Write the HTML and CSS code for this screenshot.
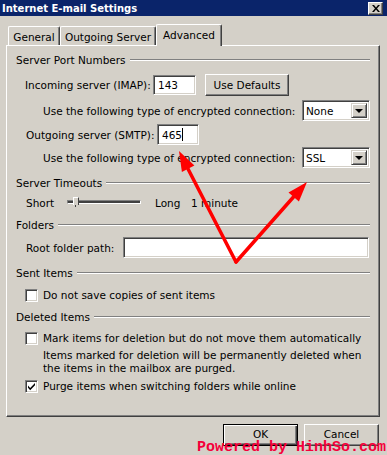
FILE: index.html
```html
<!DOCTYPE html>
<html lang="en">
<head>
  <meta charset="UTF-8">
  <title>Internet E-mail Settings</title>
  <link rel="stylesheet" href="styles.css">
</head>
<body>
  <div class="window">
    <div class="titlebar">
      <span class="title">Internet E-mail Settings</span>
      <span class="close-btn">
        <svg width="8" height="7" viewBox="0 0 8 7"><path d="M0 0h2l2 2.5L6 0h2L5 3.5 8 7H6L4 4.5 2 7H0l3-3.5z" fill="#000"/></svg>
      </span>
    </div>

    <div class="dialog">
      <div class="tabs">
        <div class="tab tab-general">General</div>
        <div class="tab tab-outgoing">Outgoing Server</div>
        <div class="tab tab-advanced active">Advanced</div>
      </div>

      <div class="panel">
        <div class="group-title"><span>Server Port Numbers</span><i class="etch"></i></div>

        <div class="row row-incoming">
          <span class="lbl lbl-incoming">Incoming server (IMAP):</span>
          <div class="field port port-in">143</div>
          <div class="btn btn-defaults">Use Defaults</div>
        </div>

        <div class="row row-enc">
          <span class="lbl">Use the following type of encrypted connection:</span>
          <div class="select"><span class="select-text">None</span><span class="drop"><i class="tri"></i></span></div>
        </div>

        <div class="row row-outgoing">
          <span class="lbl lbl-outgoing">Outgoing server (SMTP):</span>
          <div class="field port port-out">465<i class="caret"></i></div>
        </div>

        <div class="row row-enc row-enc2">
          <span class="lbl">Use the following type of encrypted connection:</span>
          <div class="select"><span class="select-text">SSL</span><span class="drop"><i class="tri"></i></span></div>
        </div>

        <div class="group-title gt-timeouts"><span>Server Timeouts</span><i class="etch"></i></div>

        <div class="row row-slider">
          <span class="lbl lbl-short">Short</span>
          <div class="slider"><i class="track"></i><i class="thumb"></i></div>
          <span class="lbl lbl-long">Long</span>
          <span class="lbl">1 minute</span>
        </div>

        <div class="group-title gt-folders"><span>Folders</span><i class="etch"></i></div>

        <div class="row row-root">
          <span class="lbl lbl-root">Root folder path:</span>
          <div class="field path"></div>
        </div>

        <div class="group-title gt-sent"><span>Sent Items</span><i class="etch"></i></div>

        <div class="row row-check row-sent">
          <span class="check"></span>
          <span class="lbl">Do not save copies of sent items</span>
        </div>

        <div class="group-title gt-deleted"><span>Deleted Items</span><i class="etch"></i></div>

        <div class="row row-check row-mark">
          <span class="check"></span>
          <span class="lbl">Mark items for deletion but do not move them automatically</span>
        </div>

        <div class="note">
          Items marked for deletion will be permanently deleted when<br>
          the items in the mailbox are purged.
        </div>

        <div class="row row-check row-purge">
          <span class="check">
            <svg width="9" height="9" viewBox="0 0 9 9"><path d="M1 3.5l2.2 2.5L8 1v2.2L3.2 8.2 1 5.8z" fill="#000"/></svg>
          </span>
          <span class="lbl">Purge items when switching folders while online</span>
        </div>
      </div>

      <div class="footer">
        <div class="btn btn-ok">OK</div>
        <div class="btn btn-cancel">Cancel</div>
      </div>
    </div>

    <!-- red annotation arrows drawn over the dialog -->
    <svg class="arrows" width="387" height="455" viewBox="0 0 387 455">
      <g stroke="#ff0000" stroke-width="3.5" fill="none" stroke-linecap="round">
        <line x1="236" y1="262" x2="186" y2="165"/>
        <line x1="236" y1="262" x2="297" y2="193"/>
      </g>
      <g fill="#ff0000">
        <polygon points="179,151 194.4,165.6 181.9,172"/>
        <polygon points="307,182 298.9,201.6 288.5,192.4"/>
      </g>
    </svg>

    <div class="watermark">Powered by HinhSo.com</div>
  </div>
</body>
</html>
```

FILE: styles.css
```css
body {
  margin: 0;
  background: #d4d0c8;
  font-family: "DejaVu Sans", sans-serif;
  font-size: 10.5px;
  color: #000;
}
.window {
  position: relative;
  width: 387px;
  height: 455px;
  overflow: hidden;
  background: #d4d0c8;
}

/* title bar */
.titlebar {
  height: 16px;
  background: #0a246a;
  display: flex;
  align-items: center;
  justify-content: space-between;
  padding: 0 4px 0 2px;
}
.title {
  color: #fff;
  font-weight: bold;
  font-size: 10px;
}
.close-btn {
  width: 15px;
  height: 13px;
  box-sizing: border-box;
  margin-top: 1px;
  background: #d4d0c8;
  border-top: 1px solid #fff;
  border-left: 1px solid #fff;
  border-right: 1px solid #404040;
  border-bottom: 1px solid #404040;
  box-shadow: inset -1px -1px #808080;
  display: flex;
  align-items: center;
  justify-content: center;
}

/* tabs */
.dialog {
  padding-top: 8px;
}
.tabs {
  display: flex;
  align-items: flex-end;
  height: 21px;
  margin-left: 8px;
}
.tab {
  box-sizing: border-box;
  height: 19px;
  border-top: 1px solid #fff;
  border-left: 1px solid #fff;
  border-right: 1px solid #404040;
  border-radius: 2px 2px 0 0;
  box-shadow: inset -1px 0 #808080;
  display: flex;
  align-items: center;
  justify-content: center;
  padding-top: 1px;
}
.tab-general { width: 52px; }
.tab-outgoing { width: 96px; }
.tab-advanced { width: 66px; }
.tab.active {
  height: 22px;
  margin-bottom: -1px;
  position: relative;
  z-index: 1;
  background: #d4d0c8;
  padding-bottom: 3px;
}

/* panel */
.panel {
  box-sizing: border-box;
  margin-left: 6px;
  width: 374px;
  height: 372px;
  border-top: 1px solid #fff;
  border-left: 1px solid #fff;
  border-right: 1px solid #404040;
  border-bottom: 1px solid #404040;
  box-shadow: inset -1px -1px #808080;
  padding: 7px 9px 0 9px;
}
.group-title {
  height: 14px;
  display: flex;
  align-items: center;
}
.group-title .etch {
  flex: 1;
  height: 1px;
  margin-left: 4px;
  background: #808080;
  border-bottom: 1px solid #fff;
}
.gt-timeouts { margin-top: 8px; }
.gt-folders { margin-top: 6px; }
.gt-sent { margin-top: 8px; }
.gt-deleted { margin-top: 8px; }

.row {
  display: flex;
  align-items: center;
}
.lbl {
  white-space: nowrap;
}

/* sunken field */
.field {
  box-sizing: border-box;
  background: #fff;
  border-top: 1px solid #808080;
  border-left: 1px solid #808080;
  border-right: 1px solid #fff;
  border-bottom: 1px solid #fff;
  box-shadow: inset 1px 1px #404040, inset -1px -1px #d4d0c8;
  display: flex;
  align-items: center;
  padding-left: 4px;
}

/* raised button */
.btn {
  box-sizing: border-box;
  background: #d4d0c8;
  border-top: 1px solid #fff;
  border-left: 1px solid #fff;
  border-right: 1px solid #404040;
  border-bottom: 1px solid #404040;
  box-shadow: inset -1px -1px #808080;
  display: flex;
  align-items: center;
  justify-content: center;
}

.row-incoming {
  margin-top: 7px;
  height: 22px;
  padding-left: 9px;
}
.lbl-incoming { width: 128px; }
.port-in { width: 43px; height: 20px; }
.btn-defaults {
  width: 84px;
  height: 22px;
  margin-left: 9px;
}

.row-enc {
  margin-top: 4px;
  height: 21px;
  padding-left: 27px;
}
.row-enc2 { margin-top: 2px; }
.select {
  box-sizing: border-box;
  margin-left: auto;
  width: 68px;
  height: 21px;
  background: #fff;
  border-top: 1px solid #808080;
  border-left: 1px solid #808080;
  border-right: 1px solid #fff;
  border-bottom: 1px solid #fff;
  box-shadow: inset 1px 1px #404040, inset -1px -1px #d4d0c8;
  display: flex;
  align-items: center;
  padding: 2px 2px 2px 3px;
}
.select-text { flex: 1; }
.drop {
  box-sizing: border-box;
  width: 16px;
  height: 15px;
  background: #d4d0c8;
  border-top: 1px solid #d4d0c8;
  border-left: 1px solid #d4d0c8;
  border-right: 1px solid #404040;
  border-bottom: 1px solid #404040;
  box-shadow: inset 1px 1px #fff, inset -1px -1px #808080;
  display: flex;
  align-items: center;
  justify-content: center;
}
.tri {
  width: 0;
  height: 0;
  border-left: 4px solid transparent;
  border-right: 4px solid transparent;
  border-top: 4px solid #000;
}

.row-outgoing {
  margin-top: 3px;
  height: 21px;
  padding-left: 10px;
}
.lbl-outgoing { width: 131px; }
.port-out { width: 42px; height: 21px; }
.caret {
  width: 1px;
  height: 13px;
  background: #000;
}

.row-slider {
  margin-top: 4px;
  height: 18px;
  padding-left: 10px;
}
.lbl-short { width: 41px; }
.slider {
  position: relative;
  width: 74px;
  height: 18px;
}
.track {
  position: absolute;
  left: 0;
  right: 0;
  top: 6px;
  height: 2px;
  border-top: 1px solid #808080;
  border-left: 1px solid #808080;
  border-bottom: 1px solid #fff;
  border-right: 1px solid #fff;
  background: #404040;
}
.thumb {
  position: absolute;
  left: 6px;
  top: 3px;
  width: 4px;
  height: 7px;
  background: #d4d0c8;
  border-left: 1px solid #fff;
  border-right: 1px solid #404040;
  border-top: 1px solid #fff;
}
.thumb::after {
  content: "";
  position: absolute;
  left: 1px;
  top: 7px;
  width: 1px;
  height: 2px;
  background: #404040;
}
.lbl-long { margin-left: 14px; width: 36px; }

.row-root {
  margin-top: 5px;
  height: 21px;
  padding-left: 10px;
}
.lbl-root { width: 97px; }
.path { width: 246px; height: 21px; }

.row-check {
  height: 14px;
  padding-left: 9px;
}
.row-sent { margin-top: 8px; }
.row-mark { margin-top: 7px; }
.row-purge { margin-top: 4px; }
.check {
  box-sizing: border-box;
  width: 13px;
  height: 13px;
  margin-right: 5px;
  background: #fff;
  border-top: 1px solid #808080;
  border-left: 1px solid #808080;
  border-right: 1px solid #fff;
  border-bottom: 1px solid #fff;
  box-shadow: inset 1px 1px #404040, inset -1px -1px #d4d0c8;
  display: flex;
  align-items: center;
  justify-content: center;
}
.note {
  margin-top: 4px;
  padding-left: 27px;
  line-height: 13px;
  white-space: nowrap;
}

/* dialog buttons */
.footer {
  display: flex;
  justify-content: flex-end;
  gap: 6px;
  margin-top: 7px;
  padding-right: 8px;
}
.btn-ok, .btn-cancel {
  width: 75px;
  height: 22px;
  padding-bottom: 2px;
}
.btn-ok {
  outline: 1px solid #000;
  outline-offset: -1px;
  border: 1px solid #000;
  box-shadow: inset 1px 1px #fff, inset -1px -1px #404040, inset -2px -2px #808080;
}

/* overlays */
.arrows {
  position: absolute;
  left: 0;
  top: 0;
  pointer-events: none;
}
.watermark {
  position: absolute;
  left: 197px;
  top: 441px;
  line-height: 14px;
  font-family: "Liberation Mono", monospace;
  font-size: 15px;
  font-weight: bold;
  color: #f5003a;
  white-space: nowrap;
}
```
